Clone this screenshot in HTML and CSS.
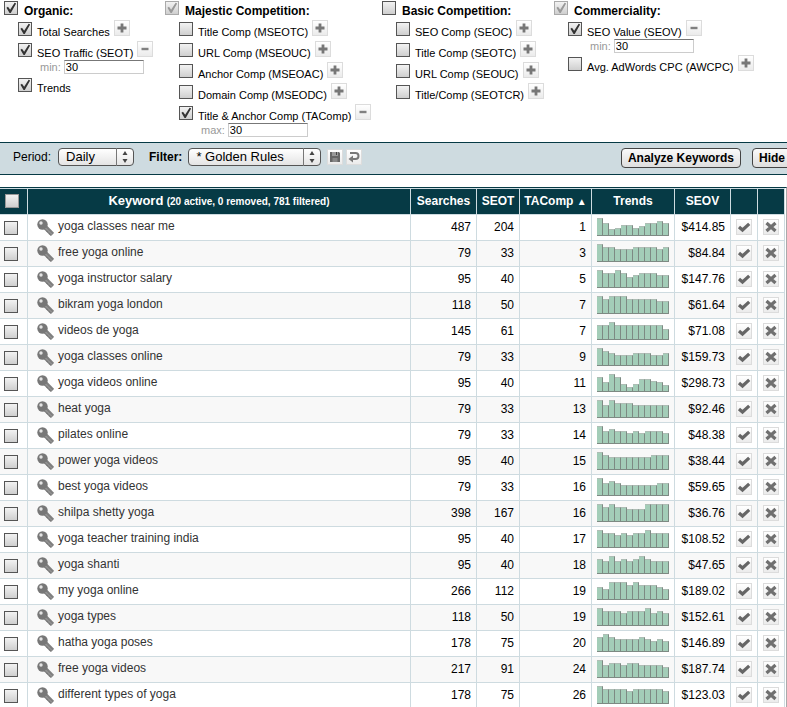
FILE: index.html
```html
<!DOCTYPE html>
<html lang="en">
<head>
<meta charset="utf-8">
<title>Keyword Analysis</title>
<link rel="stylesheet" href="styles.css">
</head>
<body>
<svg class="sprite" aria-hidden="true">
  <symbol id="plus" viewBox="0 0 16 16"><path d="M8 3.500v9M3.500 8h9" stroke="#777" stroke-width="2.800" fill="none"/></symbol>
  <symbol id="minus" viewBox="0 0 16 16"><path d="M4.500 8h7" stroke="#808080" stroke-width="2.400" fill="none"/></symbol>
  <symbol id="tick" viewBox="0 0 16 16"><path d="M3 8l3.500 3L13.200 4.800" stroke="#666" stroke-width="3.200" fill="none"/></symbol>
  <symbol id="cross" viewBox="0 0 16 16"><path d="M3.500 4l9 8M12.500 4l-9 8" stroke="#707070" stroke-width="3.200" fill="none"/></symbol>
  <symbol id="key" viewBox="0 0 17 17"><path d="M8 8l7.500 7.500" stroke="#808080" stroke-width="4.600"/><path d="M12.500 15.500l1-2M10 13l1.500-2" stroke="#777" stroke-width="2"/><circle cx="5.500" cy="5.500" r="5.200" fill="#777"/><circle cx="4" cy="4" r="1.700" fill="#e4e4e4"/><path d="M8.500 9l6.500 6.500" stroke="#a4a4a4" stroke-width="1"/></symbol>
  <symbol id="arrows" viewBox="0 0 18 18"><path d="M0.500 0v18" stroke="#777"/><path d="M6.500 7L9 3l2.500 4zM6.500 11L9 15l2.500-4z" fill="#444"/></symbol>
</svg>

<form class="panel">
  <fieldset class="group">
    <label class="head"><input type="checkbox" class="check" checked><span class="text">Organic:</span></label>
    <div class="item"><label class="opt"><input type="checkbox" class="check" checked><span class="text">Total Searches</span></label><button type="button" class="icon" aria-label="Add"><svg><use href="#plus"/></svg></button></div>
    <div class="item"><label class="opt"><input type="checkbox" class="check" checked><span class="text">SEO Traffic (SEOT)</span></label><button type="button" class="icon" aria-label="Remove"><svg><use href="#minus"/></svg></button></div>
    <label class="param">min:<input type="text" value="30"></label>
    <div class="item"><label class="opt"><input type="checkbox" class="check" checked><span class="text">Trends</span></label></div>
  </fieldset>
  <fieldset class="group">
    <label class="head"><input type="checkbox" class="check partial" checked><span class="text">Majestic Competition:</span></label>
    <div class="item"><label class="opt"><input type="checkbox" class="check"><span class="text">Title Comp (MSEOTC)</span></label><button type="button" class="icon" aria-label="Add"><svg><use href="#plus"/></svg></button></div>
    <div class="item"><label class="opt"><input type="checkbox" class="check"><span class="text">URL Comp (MSEOUC)</span></label><button type="button" class="icon" aria-label="Add"><svg><use href="#plus"/></svg></button></div>
    <div class="item"><label class="opt"><input type="checkbox" class="check"><span class="text">Anchor Comp (MSEOAC)</span></label><button type="button" class="icon" aria-label="Add"><svg><use href="#plus"/></svg></button></div>
    <div class="item"><label class="opt"><input type="checkbox" class="check"><span class="text">Domain Comp (MSEODC)</span></label><button type="button" class="icon" aria-label="Add"><svg><use href="#plus"/></svg></button></div>
    <div class="item"><label class="opt"><input type="checkbox" class="check" checked><span class="text">Title &amp; Anchor Comp (TAComp)</span></label><button type="button" class="icon" aria-label="Remove"><svg><use href="#minus"/></svg></button></div>
    <label class="param">max:<input type="text" value="30"></label>
  </fieldset>
  <fieldset class="group">
    <label class="head"><input type="checkbox" class="check"><span class="text">Basic Competition:</span></label>
    <div class="item"><label class="opt"><input type="checkbox" class="check"><span class="text">SEO Comp (SEOC)</span></label><button type="button" class="icon" aria-label="Add"><svg><use href="#plus"/></svg></button></div>
    <div class="item"><label class="opt"><input type="checkbox" class="check"><span class="text">Title Comp (SEOTC)</span></label><button type="button" class="icon" aria-label="Add"><svg><use href="#plus"/></svg></button></div>
    <div class="item"><label class="opt"><input type="checkbox" class="check"><span class="text">URL Comp (SEOUC)</span></label><button type="button" class="icon" aria-label="Add"><svg><use href="#plus"/></svg></button></div>
    <div class="item"><label class="opt"><input type="checkbox" class="check"><span class="text">Title/Comp (SEOTCR)</span></label><button type="button" class="icon" aria-label="Add"><svg><use href="#plus"/></svg></button></div>
  </fieldset>
  <fieldset class="group">
    <label class="head"><input type="checkbox" class="check partial" checked><span class="text">Commerciality:</span></label>
    <div class="item"><label class="opt"><input type="checkbox" class="check" checked><span class="text">SEO Value (SEOV)</span></label><button type="button" class="icon" aria-label="Remove"><svg><use href="#minus"/></svg></button></div>
    <label class="param">min:<input type="text" value="30"></label>
    <div class="item"><label class="opt"><input type="checkbox" class="check"><span class="text">Avg. AdWords CPC (AWCPC)</span></label><button type="button" class="icon" aria-label="Add"><svg><use href="#plus"/></svg></button></div>
  </fieldset>
</form>

<div class="toolbar">
  <label for="period">Period:</label>
  <span class="select period"><select id="period"><option>Daily</option></select><svg><use href="#arrows"/></svg></span>
  <label for="filter" class="strong">Filter:</label>
  <span class="select filter"><select id="filter"><option>* Golden Rules</option></select><svg><use href="#arrows"/></svg></span>
  <button type="button" class="icon" aria-label="Save filter"><svg viewBox="0 0 16 16"><path d="M3 3h9l1 1v9H3z" fill="#666"/><path d="M5 3h6v4H5z" fill="#999"/><path d="M5.500 9h5v4h-5z" fill="#888"/><path d="M9 3h1v3H9z" fill="#444"/></svg></button>
  <button type="button" class="icon" aria-label="Revert filter"><svg viewBox="0 0 16 16"><path d="M4 4h5.500a3 3 0 0 1 0 6H6" fill="none" stroke="#777" stroke-width="2"/><path d="M2.500 10l4.500-3.500v7z" fill="#777"/></svg></button>
  <div class="actions"><button type="button" class="push">Analyze Keywords</button><button type="button" class="push">Hide</button></div>
</div>

<main class="results">
  <table>
    <colgroup><col class="c-check"><col><col class="c-searches"><col class="c-seot"><col class="c-tacomp"><col class="c-trends"><col class="c-seov"><col class="c-act"><col class="c-act"></colgroup>
    <thead>
      <tr><th><input type="checkbox" class="check" aria-label="Select all"></th><th><span class="title">Keyword</span> <small>(20 active, 0 removed, 781 filtered)</small></th><th>Searches</th><th>SEOT</th><th>TAComp <span class="sort">▲</span></th><th>Trends</th><th>SEOV</th><th></th><th></th></tr>
    </thead>
    <tbody id="rows"></tbody>
  </table>
</main>
<script src="rows.js"></script>
</body>
</html>
```
FILE: styles.css
```css
* { box-sizing: border-box; }
body {
  margin: 0;
  height: 100vh;
  overflow: hidden;
  background: #fff;
  color: #000;
  font: 12px/14px "Liberation Sans", Arial, sans-serif;
}
.sprite { display: none; }
input, select, button { font-family: inherit; margin: 0; }

.check {
  appearance: none;
  display: block;
  flex: none;
  width: 14px;
  height: 14px;
  border: 1px solid #555;
  background: linear-gradient(#f2f2f2, #cfcfcf);
}
.check:checked::before {
  content: "";
  display: block;
  width: 12px;
  height: 12px;
  background: #333;
  clip-path: polygon(12% 48%, 25% 40%, 43% 64%, 80% 6%, 93% 12%, 48% 92%, 38% 92%);
}
.check.partial { border-color: #aaa; }
.check.partial::before { background: #999; }

.icon {
  flex: none;
  width: 16px;
  height: 16px;
  padding: 0;
  border: 1px solid #dcdcdc;
  background: linear-gradient(#fff, #ebebeb);
}
.icon svg { display: block; width: 16px; height: 16px; margin: -1px; }

.panel {
  display: grid;
  grid-template-columns: 161fr 217fr 172fr 233fr;
  padding: 1px 0 7px 4px;
}
.group { min-width: 0; margin: 0; padding: 0; border: 0; white-space: nowrap; }
.head, .opt { display: flex; align-items: flex-end; gap: 6px; }
.head { height: 15px; padding-bottom: 1px; font-weight: bold; }
.head .text { margin-bottom: -3px; }
.opt { gap: 5px; font-size: 11px; line-height: 12px; }
.opt .text { margin-bottom: -2px; }
.item {
  display: flex;
  align-items: flex-end;
  gap: 4px;
  height: 17px;
  margin: 4px 0 0 14px;
  padding-bottom: 1px;
}
.param {
  display: flex;
  align-items: center;
  gap: 3px;
  margin: 2px 0 -2px 36px;
  color: #999;
  font-size: 11px;
}
.param input {
  width: 80px;
  height: 14px;
  padding: 0 1px;
  border: 1px solid #ccc;
  border-top-color: #777;
  font-size: 11px;
}

.toolbar {
  display: flex;
  align-items: center;
  height: 33px;
  padding: 0 0 4px 13px;
  overflow: hidden;
  border: solid #063a45;
  border-width: 1px 0;
  background: #cedbe0;
  white-space: nowrap;
}
.strong { margin-left: 15px; font-weight: bold; }
.select { position: relative; margin-left: 6px; }
.select select {
  appearance: none;
  display: block;
  width: 100%;
  height: 18px;
  padding: 0 24px 0 7px;
  border: 1px solid #555;
  border-radius: 4px;
  background: linear-gradient(#fff, #e4e4e4);
  color: #000;
  font-size: 13px;
}
.select svg { position: absolute; top: 0; right: 0; width: 18px; height: 18px; pointer-events: none; }
.period { width: 76px; margin-left: 7px; }
.filter { width: 133px; }
.toolbar .icon { margin-left: 3px; }
.toolbar .filter + .icon { margin-left: 6px; }
.actions { display: flex; gap: 11px; margin: 2px -5px 0 auto; }
.push {
  height: 20px;
  padding: 0 6px;
  border: 1px solid #444;
  border-radius: 4px;
  background: linear-gradient(#fafafa, #dedede);
  color: #000;
  font-size: 12px;
  font-weight: bold;
}

.results {
  margin-top: 12px;
  padding-right: 1px;
  border-top: 1px solid #063a45;
  border-right: 1px solid #aaa;
}
table {
  width: 100%;
  table-layout: fixed;
  border-collapse: separate;
  border-spacing: 0;
  border-top: 1px solid #cedbe0;
}
.c-check { width: 28px; }
.c-searches { width: 66px; }
.c-seot { width: 43px; }
.c-tacomp { width: 72px; }
.c-trends { width: 83px; }
.c-seov { width: 56px; }
.c-act { width: 27px; }
th, td {
  height: 26px;
  padding: 0 5px;
  border: solid #cedbe0;
  border-width: 0 1px 1px 0;
  white-space: nowrap;
}
th { padding: 0 0 1px; background: #063a45; color: #fff; }
th .check { margin-left: 5px; border-color: #999; }
.title { font-size: 13px; }
small { font-size: 10px; }
.sort { font-size: 10px; }
tbody tr:nth-child(even) { background: #f8f8f8; }
td { padding-bottom: 2px; text-align: right; }
td:first-child { padding-bottom: 0; }
td .check { margin-left: -1px; }
.keyword { padding: 0 5px 0 9px; color: #333; text-align: left; }
.keyword div { display: flex; gap: 4px; }
.keyword svg { width: 17px; height: 17px; }
.bars { display: flex; align-items: flex-end; height: 18px; }
.bars i {
  width: 6px;
  border: solid #7d8a83;
  border-width: 1px 1px 1px 0;
  border-top-color: #aebdb5;
  background: #a3cdb8;
}
td .icon { display: block; }
```
FILE: rows.js
```js
const rows = [
  ["yoga classes near me", 487, 204, 1, "18 13 7 8 11 11 8 10 13 13 15 13", "$414.85"],
  ["free yoga online", 79, 33, 3, "18 15 15 13 13 13 15 15 15 15 13 15", "$84.84"],
  ["yoga instructor salary", 95, 40, 5, "18 15 15 18 15 11 13 15 15 15 13 13", "$147.76"],
  ["bikram yoga london", 118, 50, 7, "18 15 18 18 18 15 15 15 15 15 13 13", "$61.64"],
  ["videos de yoga", 145, 61, 7, "15 15 18 15 15 15 15 15 15 15 15 11", "$71.08"],
  ["yoga classes online", 79, 33, 9, "18 15 13 11 11 11 13 13 13 11 11 13", "$159.73"],
  ["yoga videos online", 95, 40, 11, "15 10 18 15 8 5 8 13 13 11 10 7", "$298.73"],
  ["heat yoga", 79, 33, 13, "18 13 18 15 15 15 13 13 13 13 13 13", "$92.46"],
  ["pilates online", 79, 33, 14, "18 13 15 13 13 11 13 11 13 13 13 11", "$48.38"],
  ["power yoga videos", 95, 40, 15, "18 15 13 13 13 13 13 13 13 15 15 15", "$38.44"],
  ["best yoga videos", 79, 33, 16, "18 13 15 13 11 11 11 11 11 11 13 13", "$59.65"],
  ["shilpa shetty yoga", 398, 167, 16, "18 15 18 15 15 13 13 13 18 18 18 18", "$36.76"],
  ["yoga teacher training india", 95, 40, 17, "18 15 15 13 15 13 15 15 18 15 15 15", "$108.52"],
  ["yoga shanti", 95, 40, 18, "15 13 18 13 15 13 15 18 15 13 13 13", "$47.65"],
  ["my yoga online", 266, 112, 19, "13 11 18 18 18 15 18 15 15 15 13 11", "$189.02"],
  ["yoga types", 118, 50, 19, "18 15 15 15 13 15 15 15 18 13 15 13", "$152.61"],
  ["hatha yoga poses", 178, 75, 20, "15 18 15 13 13 13 13 15 13 11 13 11", "$146.89"],
  ["free yoga videos", 217, 91, 24, "18 13 15 15 13 15 15 13 13 13 13 11", "$187.74"],
  ["different types of yoga", 178, 75, 26, "18 15 15 15 15 13 15 15 15 15 15 13", "$123.03"]
];

const icon = (id, label) =>
  `<button type="button" class="icon" aria-label="${label}"><svg><use href="#${id}"/></svg></button>`;

document.getElementById("rows").innerHTML = rows.map(([keyword, searches, seot, comp, trend, value]) => `
  <tr>
    <td><input type="checkbox" class="check" aria-label="Select ${keyword}"></td>
    <td class="keyword"><div><svg><use href="#key"/></svg><span>${keyword}</span></div></td>
    <td>${searches}</td><td>${seot}</td><td>${comp}</td>
    <td><div class="bars">${trend.split(" ").map(h => `<i style="height:${h}px"></i>`).join("")}</div></td>
    <td>${value}</td>
    <td>${icon("tick", "Keep")}</td>
    <td>${icon("cross", "Remove")}</td>
  </tr>`).join("");
```
